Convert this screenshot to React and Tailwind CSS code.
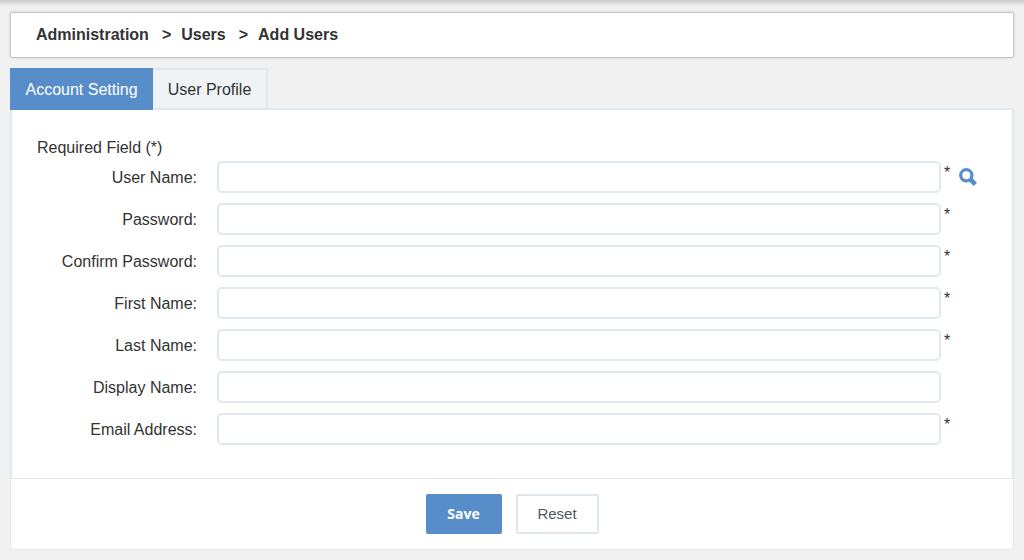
import React from "react";

const fields = [
  { id: "user-name", label: "User Name:", type: "text", required: true, lookup: true },
  { id: "password", label: "Password:", type: "password", required: true },
  { id: "confirm-password", label: "Confirm Password:", type: "password", required: true },
  { id: "first-name", label: "First Name:", type: "text", required: true },
  { id: "last-name", label: "Last Name:", type: "text", required: true },
  { id: "display-name", label: "Display Name:", type: "text", required: false },
  { id: "email", label: "Email Address:", type: "email", required: true },
];

function SearchIcon() {
  return (
    <svg width="18" height="18" viewBox="0 0 18 18" fill="none" stroke="#578ec9" aria-hidden="true">
      <circle cx="7.3" cy="7.3" r="5.6" strokeWidth="3.2" />
      <path d="M11.4 11.4L12.8 12.8" strokeWidth="3" />
      <path d="M12 12L16.4 16.4" strokeWidth="4.6" />
    </svg>
  );
}

function Breadcrumb() {
  return (
    <nav
      aria-label="Breadcrumb"
      className="rounded-xs border border-[#c8c8c8] bg-white px-[25px] py-2.5 font-bold shadow-[0_0_3px_rgba(0,0,0,0.15)]"
    >
      <ol className="flex">
        <li><a href="#administration">Administration</a></li>
        <li aria-hidden="true" className="ml-[13px] mr-2.5">&gt;</li>
        <li><a href="#users">Users</a></li>
        <li aria-hidden="true" className="ml-[13px] mr-2.5">&gt;</li>
        <li aria-current="page">Add Users</li>
      </ol>
    </nav>
  );
}

function Field({ id, label, type, required, lookup }) {
  return (
    <div className="flex h-8">
      <label htmlFor={id} className="mr-5 w-40 shrink-0 pt-px text-right leading-8">{label}</label>
      <input
        id={id}
        type={type}
        required={required}
        className="h-8 min-w-0 flex-1 rounded-[5px] border-2 border-[#e1e8ed] bg-white px-2 outline-none focus:border-[#578ec9]"
      />
      <div className="flex w-[46px] shrink-0 pl-[3px]">
        {required && <span className="w-[15px]">*</span>}
        {lookup && (
          <button type="button" aria-label="Check user name" className="h-8 cursor-pointer">
            <SearchIcon />
          </button>
        )}
      </div>
    </div>
  );
}

export default function App() {
  return (
    <div className="min-h-screen bg-[#f1f1f1] font-['Liberation_Sans',Arial,sans-serif] text-base text-[#333333]">
      <div className="h-3 bg-linear-to-b from-[#c9c9c9] to-[#f1f1f1] to-50%" />
      <main className="px-2.5 pb-2.5">
        <Breadcrumb />
        <div role="tablist" className="mt-2.5 flex">
          <button type="button" role="tab" aria-selected="true" className="h-[42px] w-[143px] cursor-pointer bg-[#578ec9] pt-0.5 text-white">
            Account Setting
          </button>
          <button type="button" role="tab" aria-selected="false" className="h-[42px] w-[115px] cursor-pointer border-y-2 border-r-2 border-[#e1e8ed] bg-[#eff3f6] pt-0.5">
            User Profile
          </button>
          <div className="flex-1 border-b-2 border-[#e1e8ed]" />
        </div>
        <form>
          <div role="tabpanel" className="border-x-2 border-[#e1e8ed] bg-white px-[25px] pb-[33px] pt-[26px]">
            <p className="mb-px">Required Field (*)</p>
            <div className="flex flex-col gap-2.5">
              {fields.map((field) => (
                <Field key={field.id} {...field} />
              ))}
            </div>
          </div>
          <div className="flex justify-center gap-3.5 rounded-b-[3px] border border-[#e1e8ed] bg-white py-[15px]">
            <button type="submit" className="h-10 w-[76px] cursor-pointer rounded-xs bg-[#578ec9] font-['Open_Sans',sans-serif] text-sm font-bold text-white">
              Save
            </button>
            <button type="reset" className="h-10 w-[83px] cursor-pointer rounded-xs border-2 border-[#e1e8ed] bg-white text-[15px] text-[#515763]">
              Reset
            </button>
          </div>
        </form>
      </main>
    </div>
  );
}
